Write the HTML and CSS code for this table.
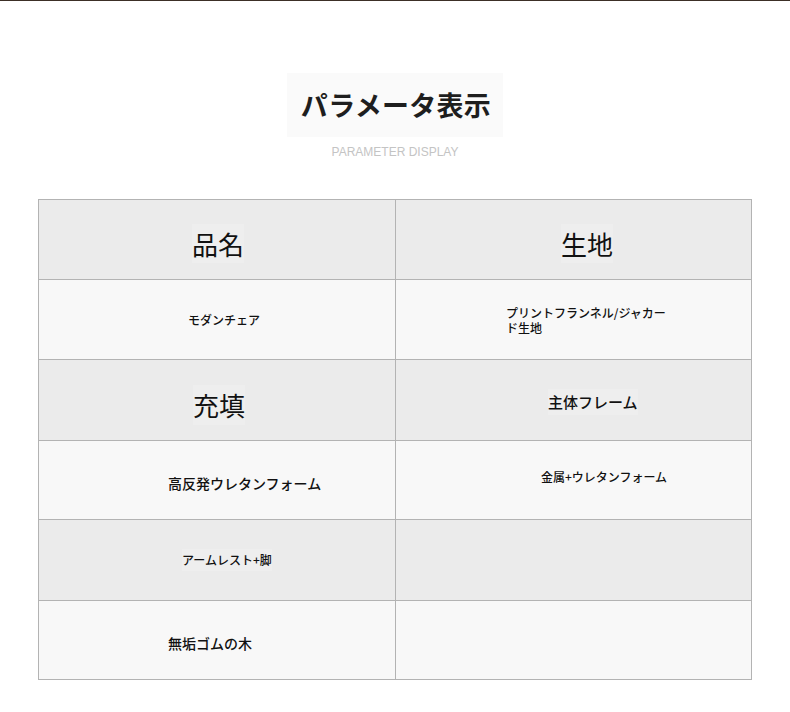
FILE: index.html
```html
<!DOCTYPE html>
<html lang="ja">
<head>
<meta charset="utf-8">
<title>パラメータ表示</title>
<link rel="stylesheet" href="styles.css">
</head>
<body>
<div class="topline"></div>
<header class="header">
  <h1 class="title">パラメータ表示</h1>
  <p class="subtitle">PARAMETER DISPLAY</p>
</header>
<div class="spec">
  <div class="cell dark c-name"><span class="label big">品名</span></div>
  <div class="cell dark c-fabric"><span class="label big">生地</span></div>
  <div class="cell light c-chair"><span class="value sm">モダンチェア</span></div>
  <div class="cell light c-print"><span class="value sm wrap">プリントフランネル/ジャカード生地</span></div>
  <div class="cell dark c-fill"><span class="label big">充填</span></div>
  <div class="cell dark c-frame"><span class="label md">主体フレーム</span></div>
  <div class="cell light c-foam"><span class="value lg">高反発ウレタンフォーム</span></div>
  <div class="cell light c-metal"><span class="value mid">金属+ウレタンフォーム</span></div>
  <div class="cell dark c-arm"><span class="label sm">アームレスト+脚</span></div>
  <div class="cell dark"></div>
  <div class="cell light c-wood"><span class="value lg">無垢ゴムの木</span></div>
  <div class="cell light"></div>
</div>
</body>
</html>
```
FILE: styles.css
```css
* { box-sizing: border-box; }
body {
  margin: 0;
  background: #ffffff;
  font-family: "Noto Sans CJK JP", "Noto Sans", sans-serif;
  color: #111;
}
.topline {
  height: 1px;
  background: #3c2f26;
}
.header {
  display: flex;
  flex-direction: column;
  align-items: center;
}
.title {
  margin: 72px 0 0;
  height: 64px;
  line-height: 64px;
  padding: 0 12px 0 14px;
  background: #fafafa;
  font-size: 27px;
  font-weight: 700;
  color: #1e1e1e;
  letter-spacing: 0.3px;
}
.subtitle {
  margin: 8px 0 0;
  line-height: 14px;
  font-family: "Liberation Sans", Arial, sans-serif;
  font-size: 12px;
  color: #c4c4c4;
}
.spec {
  margin: 40px 0 0 38px;
  width: 714px;
  display: grid;
  grid-template-columns: 356px 355px;
  grid-template-rows: 79px 79px 80px 78px 80px 78px;
  gap: 1px;
  padding: 1px;
  background: #b3b3b3;
}
.cell {
  display: flex;
  align-items: center;
}
.dark { background: #ebebeb; }
.light { background: #f8f8f8; }
.label, .value { line-height: 1.2; font-weight: 500; }
.dark .label { background: #eeeeee; padding: 4px 0; }
.big { font-size: 26px; font-weight: 400; }
.md { font-size: 15px; }
.lg { font-size: 14px; }
.mid { font-size: 12px; }
.sm { font-size: 12px; }
.wrap { max-width: 166px; line-height: 15px; }

.c-name { padding-left: 153px; padding-top: 8px; }
.c-fabric { padding-left: 165px; padding-top: 8px; }
.c-chair { padding-left: 149px; padding-top: 1px; }
.c-print { padding-left: 110px; }
.c-fill { padding-left: 154px; padding-top: 10px; }
.c-frame { padding-left: 152px; padding-top: 3px; }
.c-foam { padding-left: 129px; padding-top: 7px; }
.c-metal { padding-left: 145px; padding-bottom: 5px; }
.c-arm { padding-left: 143px; }
.c-wood { padding-left: 129px; padding-top: 7px; }
```
